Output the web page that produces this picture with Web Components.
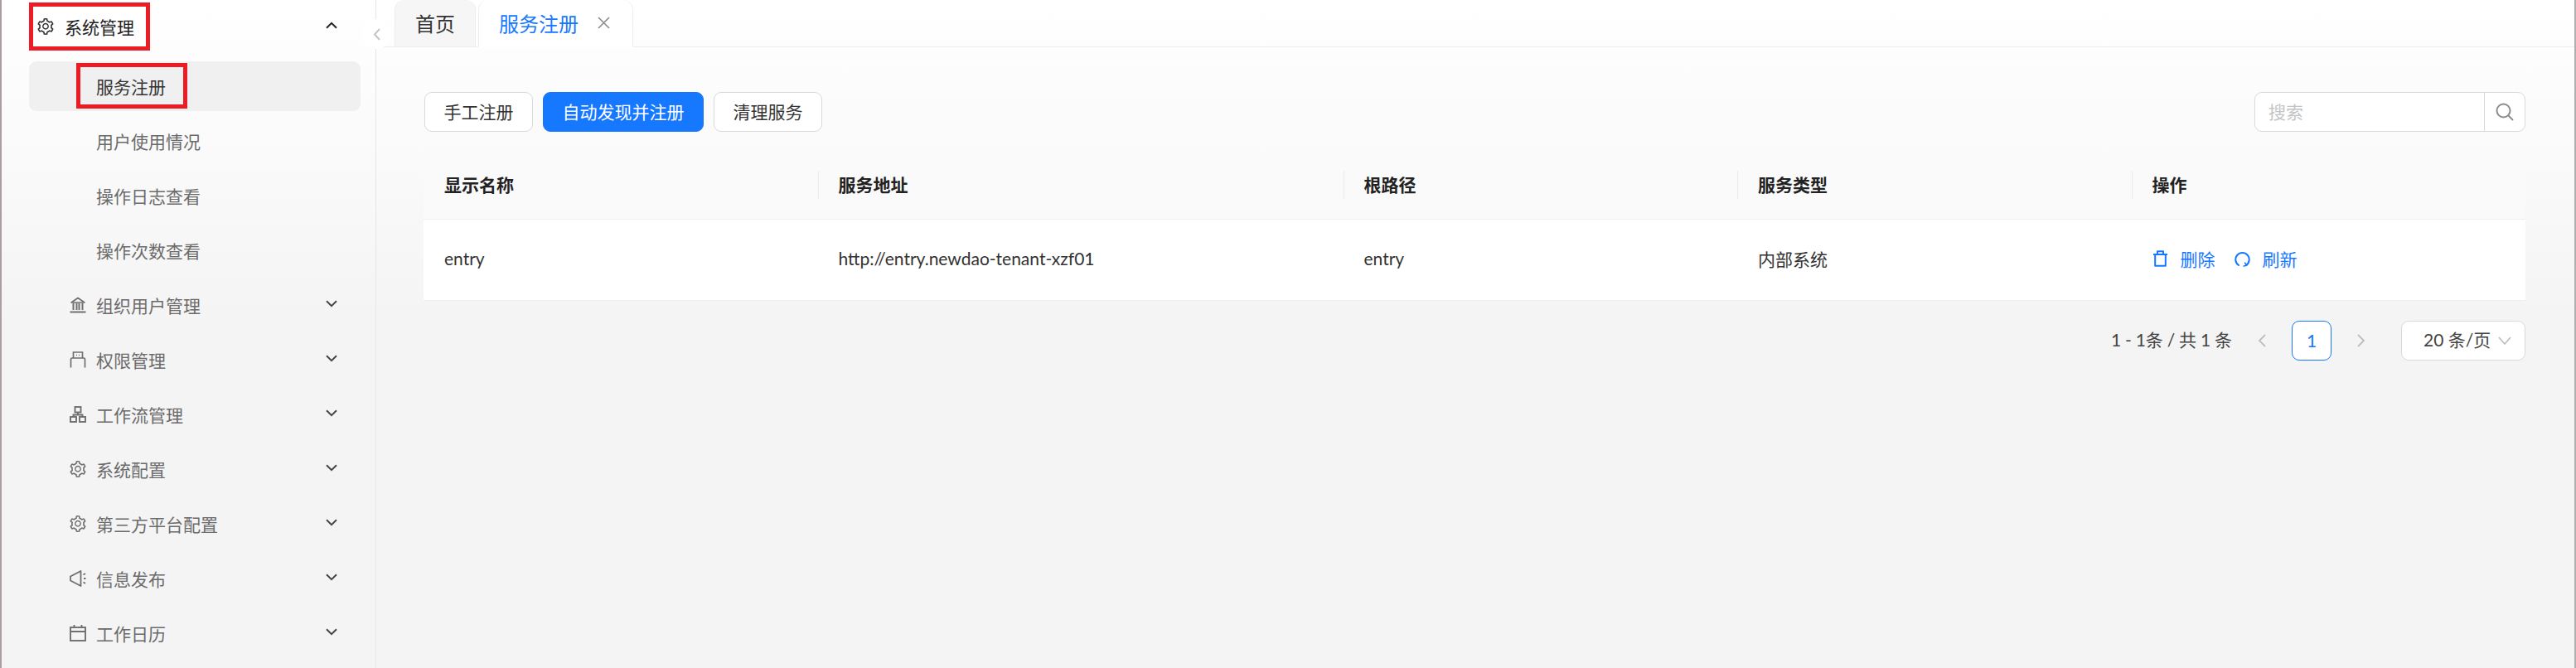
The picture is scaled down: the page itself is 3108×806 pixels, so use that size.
<!DOCTYPE html>
<html lang="zh">
<head>
<meta charset="utf-8">
<title>服务注册</title>
<style>
  html,body{margin:0;padding:0;height:100%;}
  body{font-family:Lato,"Noto Sans CJK SC","Noto Sans",sans-serif;font-size:21px;color:#333;overflow:hidden;}
</style>
</head>
<body>

<app-shell>
  <side-nav slot="nav">
    <nav-item top label="系统管理" chevron="up"><gear-icon slot="icon" style="color:#333"></gear-icon></nav-item>
    <nav-item active label="服务注册"></nav-item>
    <nav-item label="用户使用情况"></nav-item>
    <nav-item label="操作日志查看"></nav-item>
    <nav-item label="操作次数查看"></nav-item>
    <nav-item label="组织用户管理" chevron="down"><svg slot="icon" width="20" height="20" viewBox="0 0 20 20" fill="none" stroke="#6f6f6f" stroke-width="2"><path d="M2 7L10 1.5 18 7Z" stroke-linejoin="round" stroke-width="1.6"/><path d="M4.5 8v8M8.5 8v8M11.5 8v8M15.5 8v8"/><path d="M0.5 18.5h19"/></svg></nav-item>
    <nav-item label="权限管理" chevron="down"><svg slot="icon" width="20" height="20" viewBox="0 0 20 20" fill="none" stroke="#6f6f6f" stroke-width="1.7"><path d="M1.5 19.5V9.5Q1.5 8 3 8H17Q18.5 8 18.5 9.5V19.5"/><path d="M4.5 8V1H15.5V8"/><path d="M8 4.5h1M11 4.5h1"/></svg></nav-item>
    <nav-item label="工作流管理" chevron="down"><svg slot="icon" width="20" height="20" viewBox="0 0 20 20" fill="none" stroke="#6f6f6f" stroke-width="1.9"><rect x="6.5" y="1" width="7" height="6.5"/><rect x="1" y="13" width="7" height="6"/><rect x="12" y="13" width="7" height="6"/><path d="M10 7.5V10.5M4.5 13V10.5H15.5V13"/></svg></nav-item>
    <nav-item label="系统配置" chevron="down"><gear-icon slot="icon"></gear-icon></nav-item>
    <nav-item label="第三方平台配置" chevron="down"><gear-icon slot="icon"></gear-icon></nav-item>
    <nav-item label="信息发布" chevron="down"><svg slot="icon" width="20" height="20" viewBox="0 0 20 20" fill="none" stroke="#6f6f6f" stroke-width="1.8"><path d="M1 7.5L13.5 1V19L1 12.5Z" stroke-linejoin="round"/><path d="M16.5 5.5L19 4M17 10H19.5M16.5 14.5L19 16"/></svg></nav-item>
    <nav-item label="工作日历" chevron="down"><svg slot="icon" width="20" height="20" viewBox="0 0 20 20" fill="none" stroke="#6f6f6f" stroke-width="1.9"><rect x="1" y="3" width="18" height="16"/><path d="M1 8H19M5.5 0V4M14.5 0V4"/></svg></nav-item>
  </side-nav>

  <tab-strip slot="tabs">
    <tab-chip>首页</tab-chip>
    <tab-chip active closable>服务注册</tab-chip>
  </tab-strip>

  <svc-toolbar slot="content">
    <ui-button>手工注册</ui-button>
    <ui-button primary>自动发现并注册</ui-button>
    <ui-button>清理服务</ui-button>
    <search-box slot="end" placeholder="搜索"></search-box>
  </svc-toolbar>

  <svc-table slot="content">
    <t-cell head>显示名称</t-cell>
    <t-cell head sep>服务地址</t-cell>
    <t-cell head sep>根路径</t-cell>
    <t-cell head sep>服务类型</t-cell>
    <t-cell head sep>操作</t-cell>
    <t-cell>entry</t-cell>
    <t-cell>http://entry.newdao-tenant-xzf01</t-cell>
    <t-cell>entry</t-cell>
    <t-cell>内部系统</t-cell>
    <t-cell>
      <row-action>
        <svg slot="icon" width="19" height="20" viewBox="0 0 19 20" fill="none" stroke="#1677ff" stroke-width="2" stroke-linejoin="round"><path d="M1 5H18M6 5V1.2H13V5M3.2 5V18.8H15.8V5"/></svg>删除
      </row-action>
      <row-action>
        <svg slot="icon" width="19" height="20" viewBox="0 0 19 20" fill="none" stroke="#1677ff" stroke-width="2" stroke-linecap="round"><path d="M5 18A8.2 8.2 0 1 1 14 18"/><path d="M12.6 15.2L14.4 18.2 11.2 19" stroke-width="1.6"/></svg>刷新
      </row-action>
    </t-cell>
  </svc-table>

  <svc-pager slot="content" range="1 - 1条 / 共 1 条" page="1" size="20 条/页"></svc-pager>

  <red-mark slot="overlay" style="left:35px;top:3px;width:146px;height:58px"></red-mark>
  <red-mark slot="overlay" style="left:92px;top:76px;width:134px;height:55px"></red-mark>
  <collapse-dot slot="overlay"></collapse-dot>
</app-shell>

<script>
function makeEl(name, css, html, setup) {
  class El extends HTMLElement {
    constructor() {
      super();
      const shadow = this.attachShadow({mode: 'open'});
      shadow.innerHTML = `<style>${css}</style>${html}`;
    }
    connectedCallback() { if (setup) setup(this, this.shadowRoot); }
  }
  customElements.define(name, El);
}

makeEl('gear-icon', `
  :host{display:block;width:20px;height:20px;color:#6f6f6f;}
  svg{display:block;}
`, `<svg width="20" height="20" viewBox="64 64 896 896" fill="currentColor"><path d="M924.8 625.7l-65.5-56c3.1-19 4.7-38.4 4.7-57.8s-1.6-38.8-4.7-57.8l65.5-56a32.03 32.03 0 0 0 9.3-35.2l-.9-2.6a443.74 443.74 0 0 0-79.7-137.9l-1.8-2.1a32.12 32.12 0 0 0-35.1-9.5l-81.3 28.9c-30-24.6-63.5-44-99.7-57.6l-15.7-85a32.05 32.05 0 0 0-25.8-25.7l-2.7-.5c-52.1-9.4-106.9-9.4-159 0l-2.7.5a32.05 32.05 0 0 0-25.8 25.7l-15.8 85.4a351.86 351.86 0 0 0-99 57.4l-81.9-29.1a32 32 0 0 0-35.1 9.5l-1.8 2.1a446.02 446.02 0 0 0-79.7 137.9l-.9 2.6c-4.5 12.5-.8 26.5 9.3 35.2l66.3 56.6c-3.1 18.8-4.6 38-4.6 57.1 0 19.2 1.5 38.4 4.6 57.1L99 625.5a32.03 32.03 0 0 0-9.3 35.2l.9 2.6c18.1 50.4 44.9 96.9 79.7 137.9l1.8 2.1a32.12 32.12 0 0 0 35.1 9.5l81.9-29.1c29.8 24.5 63.1 43.9 99 57.4l15.8 85.4a32.05 32.05 0 0 0 25.8 25.7l2.7.5a449.4 449.4 0 0 0 159 0l2.7-.5a32.05 32.05 0 0 0 25.8-25.7l15.7-85a350 350 0 0 0 99.7-57.6l81.3 28.9a32 32 0 0 0 35.1-9.5l1.8-2.1c34.8-41.1 61.6-87.5 79.7-137.9l.9-2.6c4.5-12.3.8-26.3-9.3-35zM788.3 465.9c2.5 15.1 3.8 30.6 3.8 46.1s-1.3 31-3.8 46.1l-6.6 40.1 74.7 63.9a370.03 370.03 0 0 1-42.6 73.6L721 702.8l-31.4 25.8c-23.9 19.6-50.5 35-79.3 45.8l-38.1 14.3-17.9 97a377.5 377.5 0 0 1-85 0l-17.9-97.2-37.8-14.5c-28.5-10.8-55-26.2-78.7-45.7l-31.4-25.9-93.4 33.2c-17-22.9-31.2-47.6-42.6-73.6l75.5-64.5-6.5-40c-2.4-14.9-3.7-30.3-3.7-45.5 0-15.3 1.2-30.6 3.7-45.5l6.5-40-75.5-64.5c11.3-26.1 25.6-50.7 42.6-73.6l93.4 33.2 31.4-25.9c23.7-19.5 50.2-34.9 78.7-45.7l37.9-14.3 17.9-97.2c28.1-3.2 56.8-3.2 85 0l17.9 97 38.1 14.3c28.7 10.8 55.4 26.2 79.3 45.8l31.4 25.8 92.8-32.9c17 22.9 31.2 47.6 42.6 73.6L781.8 426l6.5 39.9zM512 326c-97.2 0-176 78.8-176 176s78.8 176 176 176 176-78.8 176-176-78.8-176-176-176zm79.2 255.2A111.6 111.6 0 0 1 512 614c-29.9 0-58-11.7-79.2-32.8A111.6 111.6 0 0 1 400 502c0-29.9 11.7-58 32.8-79.2C454 401.6 482.1 390 512 390c29.9 0 58 11.6 79.2 32.8A111.6 111.6 0 0 1 624 502c0 29.9-11.7 58-32.8 79.2z"/></svg>`);

makeEl('app-shell', `
  :host{
    display:flex;
    position:relative;
    box-sizing:border-box;
    width:3108px;height:806px;
    overflow:hidden;
    background:linear-gradient(#fff 0,#f4f4f4 400px);
    border-left:2px solid #a89f9f;
    border-right:2px solid #b0b0b0;
  }
  .main{flex:1;min-width:0;display:flex;flex-direction:column;}
  .content{display:flex;flex-direction:column;padding:54px 59px 0 57px;}
  .overlay{position:absolute;left:-2px;top:0;}
`, `
  <slot name="nav"></slot>
  <div class="main">
    <slot name="tabs"></slot>
    <div class="content"><slot name="content"></slot></div>
  </div>
  <div class="overlay"><slot name="overlay"></slot></div>
`);

makeEl('side-nav', `
  :host{
    display:flex;
    flex-direction:column;
    flex:none;
    box-sizing:border-box;
    width:452px;
    padding:2px 18px 0 33px;
    border-right:1px solid #e6e6e6;
  }
`, `<slot></slot>`);

makeEl('nav-item', `
  :host{
    display:flex;
    align-items:center;
    flex:none;
    height:60px;
    margin-bottom:6px;
    padding-left:81px;
    border-radius:9px;
    color:#6b6b6b;
  }
  :host([top]){padding-left:43px;color:#222;margin-bottom:12px;}
  :host([active]){background:#f0f0f0;color:#333;}
  .icon{display:none;align-items:center;width:20px;height:20px;margin-right:12px;}
  :host([has-icon]) .icon{display:flex;margin-left:-32px;}
  :host([top]) .icon{margin-left:-33px;margin-right:13px;}
  .chev{margin-left:auto;margin-right:28px;margin-bottom:4px;display:none;}
  :host([chevron]) .chev{display:block;}
  :host([chevron="up"]) .chev{transform:rotate(180deg);}
  .lbl{line-height:1;}
`, `
  <span class="icon"><slot name="icon"></slot></span>
  <span class="lbl"></span>
  <svg class="chev" width="14" height="9" viewBox="0 0 14 9" fill="none" stroke="#444" stroke-width="2"><path d="M1 1.2L7 7.2 13 1.2"/></svg>
`, (el, root) => {
  root.querySelector('.lbl').textContent = el.getAttribute('label');
  if (el.querySelector('[slot=icon]')) el.setAttribute('has-icon', '');
  if (el.getAttribute('chevron') === 'up') root.querySelector('.chev').setAttribute('stroke', '#222');
});

makeEl('tab-strip', `
  :host{
    display:flex;
    align-items:flex-end;
    flex:none;
    box-sizing:border-box;
    height:57px;
    padding-left:22px;
    gap:3px;
    border-bottom:1px solid #ededed;
  }
`, `<slot></slot>`);

makeEl('tab-chip', `
  :host{
    display:flex;
    align-items:center;
    box-sizing:border-box;
    height:57px;
    margin-bottom:-1px;
    padding:0 24px 2px;
    font-size:24px;
    color:#333;
    background:#f6f6f6;
    border:1px solid #ededed;
    border-top:0;
    border-top-left-radius:12px;
    border-top-right-radius:12px;
  }
  :host([active]){color:#1677ff;background:#fff;border-bottom-color:#fff;}
  .x{display:none;margin-left:23px;margin-right:3px;}
  :host([closable]) .x{display:block;}
`, `
  <slot></slot>
  <svg class="x" width="15" height="15" viewBox="0 0 15 15" stroke="#8c8c8c" stroke-width="1.6"><path d="M1 1L14 14M14 1L1 14"/></svg>
`);

makeEl('svc-toolbar', `
  :host{display:flex;align-items:flex-start;gap:12px;height:48px;margin-bottom:24px;padding-left:1px;}
  .end{margin-left:auto;}
`, `<slot></slot><div class="end"><slot name="end"></slot></div>`);

makeEl('ui-button', `
  :host{
    display:inline-flex;
    align-items:center;
    box-sizing:border-box;
    height:48px;
    padding:0 22.5px 3px;
    background:#fff;
    color:#333;
    border:1px solid #d9d9d9;
    border-radius:9px;
  }
  :host([primary]){background:#1677ff;border-color:#1677ff;color:#fff;}
`, `<slot></slot>`);

makeEl('search-box', `
  :host{
    display:flex;
    box-sizing:border-box;
    width:327px;height:48px;
    background:#fff;
    border:1px solid #d9d9d9;
    border-radius:9px;
  }
  .ph{flex:1;display:flex;align-items:center;padding:0 0 3px 16px;color:#c4c4c4;}
  .btn{flex:none;width:48px;display:flex;align-items:center;justify-content:center;border-left:1px solid #d9d9d9;}
`, `
  <div class="ph"></div>
  <div class="btn"><svg width="22" height="22" viewBox="0 0 22 22" fill="none" stroke="#8c8c8c" stroke-width="2"><circle cx="9.5" cy="9.5" r="8"/><path d="M15 15L21 21"/></svg></div>
`, (el, root) => { root.querySelector('.ph').textContent = el.getAttribute('placeholder'); });

makeEl('svc-table', `
  :host{
    display:grid;
    grid-template-columns:3fr 4fr 3fr 3fr 3fr;
    grid-template-rows:82px 97px;
    border-bottom:1px solid #efefef;
    border-radius:12px 12px 0 0;
    overflow:hidden;
  }
`, `<slot></slot>`);

makeEl('t-cell', `
  :host{
    display:flex;
    align-items:center;
    position:relative;
    box-sizing:border-box;
    padding:0 0 4px 25px;
    background:#fff;
    color:#333;
    gap:23px;
  }
  :host([head]){background:#fafafa;font-weight:700;color:#222;border-bottom:1px solid #efefef;}
  :host([sep])::before{content:"";position:absolute;left:0;top:23px;height:34px;width:1px;background:#ececec;}
`, `<slot></slot>`);

makeEl('row-action', `
  :host{display:inline-flex;align-items:center;gap:15px;color:#1677ff;}
  ::slotted(svg){flex:none;}
`, `<slot name="icon"></slot><slot></slot>`);

makeEl('svc-pager', `
  :host{
    display:flex;
    align-items:center;
    justify-content:flex-end;
    gap:12px;
    height:48px;
    margin-top:24px;
    color:#444;
  }
  .range{word-spacing:-0.5px;padding-bottom:4px;}
  .nav{width:48px;height:48px;display:flex;align-items:center;justify-content:center;}
  .page{
    width:48px;height:48px;box-sizing:border-box;
    display:flex;align-items:center;justify-content:center;padding-bottom:2px;
    border:1px solid #1677ff;border-radius:9px;
    background:#fff;color:#1677ff;
  }
  .size{
    width:150px;height:48px;box-sizing:border-box;margin-left:12px;
    display:flex;align-items:center;padding-left:26px;
    border:1px solid #d9d9d9;border-radius:9px;background:#fff;color:#444;
  }
  .txt{padding-bottom:4px;}
  .size svg{margin-left:auto;margin-right:16px;}
`, `
  <span class="range"></span>
  <div class="nav"><svg width="10" height="16" viewBox="0 0 10 16" fill="none" stroke="#bdbdbd" stroke-width="1.8"><path d="M9 1L2 8 9 15"/></svg></div>
  <div class="page"></div>
  <div class="nav"><svg width="10" height="16" viewBox="0 0 10 16" fill="none" stroke="#bdbdbd" stroke-width="1.8"><path d="M1 1L8 8 1 15"/></svg></div>
  <div class="size"><span class="txt"></span><svg width="16" height="10" viewBox="0 0 16 10" fill="none" stroke="#bdbdbd" stroke-width="1.6"><path d="M1 1L8 9 15 1"/></svg></div>
`, (el, root) => {
  root.querySelector('.range').textContent = el.getAttribute('range');
  root.querySelector('.page').textContent = el.getAttribute('page');
  root.querySelector('.txt').textContent = el.getAttribute('size');
});

makeEl('red-mark', `
  :host{position:absolute;display:block;box-sizing:border-box;border:5px solid #ed1c24;}
`, ``);

makeEl('collapse-dot', `
  :host{
    position:absolute;left:436px;top:23px;
    display:flex;align-items:center;justify-content:center;
    width:36px;height:36px;border-radius:50%;background:#fff;
  }
`, `<svg width="9" height="15" viewBox="0 0 9 15" fill="none" stroke="#c4c4c4" stroke-width="2"><path d="M8 1L2 7.5 8 14"/></svg>`);
</script>
</body>
</html>
